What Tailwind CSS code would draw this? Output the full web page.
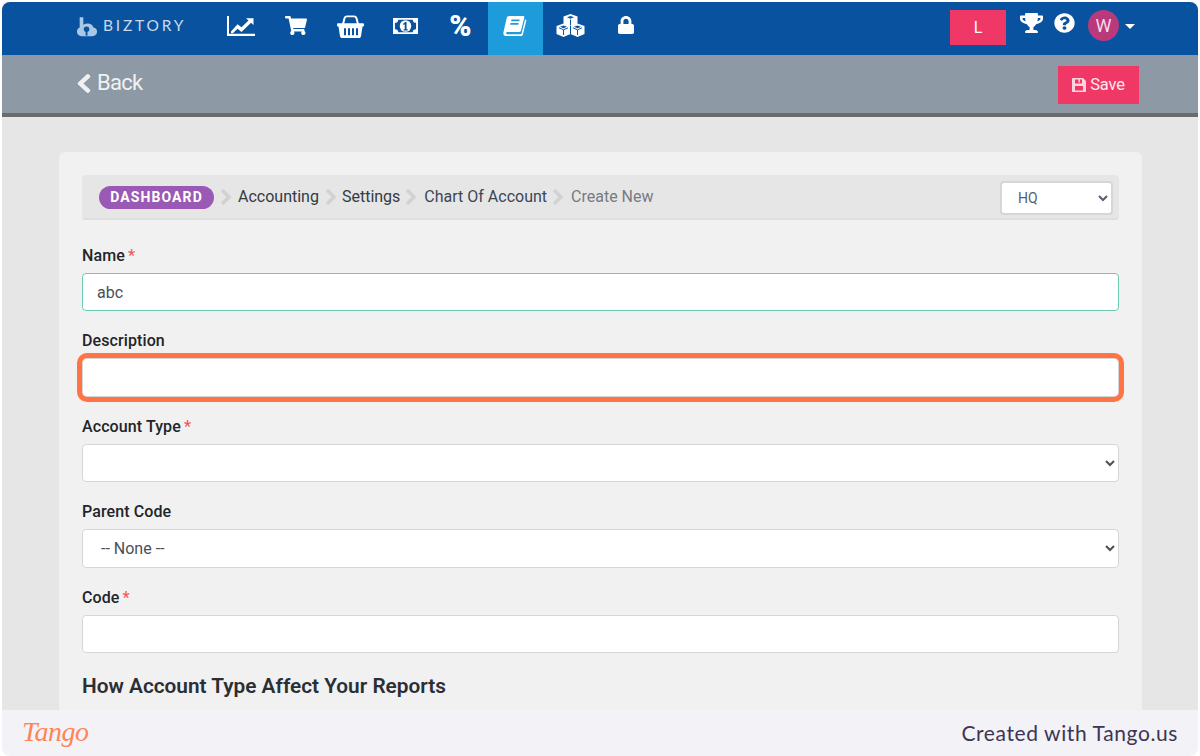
<!DOCTYPE html>
<html lang="en">
<head>
    <meta charset="UTF-8">
    <title>Biztory - Chart Of Account</title>
    <script src="https://cdn.jsdelivr.net/npm/@tailwindcss/browser@4"></script>
</head>
<body class="h-screen overflow-hidden bg-white px-[2px] pt-[2px] flex flex-col font-['Roboto',sans-serif]">
    <div class="flex-1 min-h-0 overflow-hidden rounded-t-[8px] bg-[#e6e6e6]">
        <!-- Top nav -->
        <nav class="h-[53px] bg-[#09529f] flex items-start text-white">
            <div class="w-[211px] pl-[74px] pt-[13px] flex items-center gap-[5px] h-[35px]">
                <svg class="w-[22px] h-[21px] shrink-0" viewBox="0 0 24 22"><path fill="#a9c8e6" d="M4 1h4v8c4-2.500 10-1.500 11 3 3 .5 4 2.500 4 4.500 0 3-2 5-5 5H6c-3 0-5-2-5-5 0-2.500 1.500-4 3-4.500z"/><circle cx="11.500" cy="14" r="3" fill="#09529f"/><rect x="10.500" y="15" width="2" height="6" fill="#09529f"/></svg>
                <span class="text-[15.500px] tracking-[2.800px] text-[#c9d9ea] font-['Lato',sans-serif]">BIZTORY</span>
            </div>
            <a class="w-[55px] h-[53px] flex items-center justify-center pb-[6px]">
                <svg class="w-[28px] h-[20px]" viewBox="0 0 28 22" preserveAspectRatio="none" fill="white"><path d="M0 0h2v19.500h26V22H0z"/><path d="M4 17l6.500-8 4 3.500L21.500 5l-2.500-2.500h7.500V10l-2.500-2.500-9.500 10-4-3.500-4.500 5H4z"/></svg>
            </a>
            <a class="w-[55px] h-[53px] flex items-center justify-center pb-[6px]">
                <svg class="w-[22px] h-[19px]" viewBox="0 0 576 512" preserveAspectRatio="none" fill="white"><path d="M528.12 301.319l47.273-208C578.806 78.301 567.391 64 551.99 64H159.208l-9.166-44.810C147.758 8.021 137.93 0 126.529 0H24C10.745 0 0 10.745 0 24v16c0 13.255 10.745 24 24 24h69.883l70.248 343.435C147.325 417.100 136 435.222 136 456c0 30.928 25.072 56 56 56s56-25.072 56-56c0-15.674-6.447-29.835-16.824-40h209.647C430.447 426.165 424 440.326 424 456c0 30.928 25.072 56 56 56s56-25.072 56-56c0-22.172-12.888-41.332-31.579-50.405l5.517-24.276c3.413-15.018-8.002-29.319-23.403-29.319H218.117l-6.545-32h293.145c11.206 0 20.920-7.754 23.403-18.681z"/></svg>
            </a>
            <a class="w-[55px] h-[53px] flex items-center justify-center pb-[5px] pr-[1px]">
                <svg class="w-[27px] h-[23px]" viewBox="0 0 27 25" preserveAspectRatio="none"><path fill="none" stroke="white" stroke-width="2" d="M6 10l1.500-6.500C8 2 9 1.500 10 1.500h7c1 0 2 .5 2.500 2L21 10"/><path fill="white" fill-rule="evenodd" d="M1 9h25c.6 0 1 .4 1 1v1.500c0 .6-.4 1-1 1h-.5L24 23c-.2 1.200-1 2-2.200 2H5.200C4 25 3.200 24.200 3 23L1.500 12.500H1c-.6 0-1-.4-1-1V10c0-.6.4-1 1-1zM7 14.500v7.500h2v-7.500zM11 14.500v7.500h2v-7.500zM15 14.500v7.500h2v-7.500zM19 14.500v7.500h2v-7.500z"/></svg>
            </a>
            <a class="w-[55px] h-[53px] flex items-center justify-center pb-[6px]">
                <svg class="w-[25px] h-[18px]" viewBox="0 0 26 20" preserveAspectRatio="none"><path fill="white" fill-rule="evenodd" d="M0 1h26v18H0zM2 6.500v7c2.200 0 3.500 1.300 3.500 3.500h15c0-2.200 1.300-3.500 3.500-3.500v-7c-2.200 0-3.500-1.300-3.500-3.500h-15C5.500 5.200 4.200 6.500 2 6.500z"/><ellipse cx="13" cy="10" rx="6" ry="6.500" fill="white"/><path fill="#09529f" d="M12.700 5.500h1.400v8h1.200V15h-4.300v-1.500h1.200V8l-1.100.8-.8-1.100z"/></svg>
            </a>
            <a class="w-[55px] h-[53px] flex items-center justify-center pb-[5px] text-[30px] font-black leading-none">%</a>
            <a class="w-[55px] h-[53px] flex items-center justify-center pb-[6px] bg-[#1e9bdb]">
                <svg class="w-[25px] h-[20px]" viewBox="0 0 25 20"><path fill="white" fill-rule="evenodd" d="M6 0H20c1 0 1.500.7 1.300 1.600l-3.200 13c-.2.9-.9 1.400-1.800 1.400H4.400c-1.500 0-1.600 2.200 0 2.200h12.800c.8 0 1.300-.3 1.500-1L22 3.500l.2 0c.8 0 1.200.6 1 1.400l-3.200 13.300c-.2 1-.9 1.800-2 1.800H3c-2 0-3-1.500-2.600-3.500L3.700 2C4 .7 4.800 0 6 0zM8.500 3.500l-.4 1.700h8.200l.4-1.700zM7.500 7l-.4 1.700h8.200l.4-1.700z"/></svg>
            </a>
            <a class="w-[55px] h-[53px] flex items-center justify-center pb-[6px]">
                <svg class="w-[29px] h-[23px]" viewBox="0 0 29 23">
                    <g fill="white"><path d="M14.500 0l7 2.600v7.200l-7 2.900-7-2.900V2.600z"/><path d="M7.500 9.500l7 2.600v8L7.500 23 .5 20.100v-8z"/><path d="M21.500 9.500l7 2.600v8L21.500 23l-7-2.900v-8z"/></g>
                    <g fill="#09529f"><path d="M14.500 2l3.500 1.300-3.500 1.400-3.500-1.400z"/><path d="M7.500 11.500l3.500 1.300-3.500 1.400L4 12.800z"/><path d="M21.500 11.500l3.500 1.300-3.500 1.400-3.500-1.400z"/></g>
                    <path fill="none" stroke="#09529f" stroke-width="1" d="M14.500 5.500v6M3 13.800l4.500 2 4.500-2M7.500 16v5M17 13.800l4.500 2 4.500-2M21.500 16v5M14.500 12v8"/>
                </svg>
            </a>
            <a class="w-[55px] h-[53px] flex items-center justify-center pb-[7px]">
                <svg class="w-[16px] h-[18px]" viewBox="0 0 448 512" preserveAspectRatio="none" fill="white"><path d="M400 224h-24v-72C376 68.200 307.800 0 224 0S72 68.200 72 152v72H48c-26.500 0-48 21.500-48 48v192c0 26.500 21.500 48 48 48h352c26.500 0 48-21.500 48-48V272c0-26.500-21.500-48-48-48zm-104 0H152v-72c0-39.700 32.300-72 72-72s72 32.300 72 72v72z"/></svg>
            </a>
            <div class="ml-auto mr-[63px] flex items-start">
                <button class="mt-[8px] w-[56px] h-[35px] bg-[#ef3866] text-[16px] text-white">L</button>
                <svg class="ml-[14px] mt-[11px] w-[23px] h-[20px]" viewBox="0 0 576 512" preserveAspectRatio="none" fill="white"><path d="M552 64H448V24c0-13.300-10.700-24-24-24H152c-13.300 0-24 10.700-24 24v40H24C10.700 64 0 74.700 0 88v56c0 35.700 22.500 72.400 61.900 100.700 31.500 22.700 69.800 37.100 110 41.700C203.300 338.500 240 360 240 360v72h-48c-35.300 0-64 20.700-64 56v12c0 6.600 5.400 12 12 12h296c6.600 0 12-5.400 12-12v-12c0-35.300-28.700-56-64-56h-48v-72s36.700-21.500 68.100-73.600c40.300-4.600 78.600-19 110-41.700 39.300-28.300 61.900-65 61.900-100.700V88c0-13.300-10.700-24-24-24zM99.300 192.800C74.900 175.200 64 155.600 64 144v-16h64.200c1 32.600 5.800 61.200 12.800 86.200-15.100-5.200-29.200-12.400-41.700-21.400zM512 144c0 16.100-17.700 36.100-35.300 48.800-12.500 9-26.700 16.200-41.800 21.400 7-25 11.800-53.600 12.800-86.200H512v16z"/></svg>
                <svg class="ml-[11px] mt-[11px] w-[21px] h-[20px]" viewBox="0 0 512 512" preserveAspectRatio="none" fill="white"><path d="M504 256c0 136.997-111.043 248-248 248S8 392.997 8 256C8 119.083 119.043 8 256 8s248 111.083 248 248zM262.655 90c-54.497 0-89.255 22.957-116.549 63.758-3.536 5.286-2.353 12.415 2.715 16.258l34.699 26.310c5.205 3.947 12.621 3.008 16.665-2.122 17.864-22.658 30.113-35.797 57.303-35.797 20.429 0 45.698 13.148 45.698 32.958 0 14.976-12.363 22.667-32.534 33.976C247.128 238.528 216 254.941 216 296v4c0 6.627 5.373 12 12 12h56c6.627 0 12-5.373 12-12v-1.333c0-28.462 83.186-29.647 83.186-106.667 0-58.002-60.165-102-116.531-102zM256 338c-25.365 0-46 20.635-46 46 0 25.364 20.635 46 46 46s46-20.636 46-46c0-25.365-20.635-46-46-46z"/></svg>
                <div class="ml-[13px] mt-[8px] w-[31px] h-[31px] rounded-full bg-[#b93a7c] flex items-center justify-center text-[18px] text-[#f7dbe9]">W</div>
                <span class="ml-[6px] mt-[22px] w-0 h-0 border-x-[5px] border-x-transparent border-t-[5px] border-t-white"></span>
            </div>
        </nav>

        <!-- Action bar -->
        <div class="h-[62px] bg-[#8d99a5] border-b-[4px] border-b-[#6b6b6b] flex items-start justify-between pl-[75px] pr-[59px]">
            <a class="mt-[11px] flex items-center gap-[6px] text-[22px] tracking-[-0.700px] leading-[34px] text-[#f0f1f2]">
                <svg class="w-[14px] h-[21px]" viewBox="0 0 320 512" preserveAspectRatio="none" fill="currentColor" stroke="currentColor" stroke-width="24"><path d="M34.520 239.030L228.870 44.690c9.370-9.370 24.570-9.370 33.940 0l22.670 22.670c9.360 9.360 9.370 24.520.04 33.900L131.490 256l154.020 154.750c9.340 9.380 9.320 24.540-.04 33.900l-22.670 22.670c-9.370 9.370-24.570 9.370-33.940 0L34.520 272.970c-9.370-9.370-9.370-24.570 0-33.940z"/></svg>
                Back
            </a>
            <button class="mt-[11px] w-[81px] h-[38px] bg-[#ef3866] flex items-center justify-center gap-[4px] text-[16.500px] tracking-[-0.200px] text-[#fde8ee]">
                <svg class="w-[14px] h-[14px]" viewBox="0 0 14 14"><path fill="#fbd6e0" fill-rule="evenodd" d="M1 0h10l3 3v10c0 .6-.4 1-1 1H1c-.6 0-1-.4-1-1V1c0-.6.4-1 1-1zM3 1.500V5.500h7V1.500H8v3H6.500v-3zM3 8v4.500h8V8z"/></svg>
                Save
            </button>
        </div>

        <!-- Form card -->
        <div class="mt-[35px] ml-[57px] mr-[56px] bg-[#f1f1f1] rounded-[6px] px-[23px] pt-[23px] pb-[40px]">
            <!-- Breadcrumb -->
            <div class="h-[45px] mb-[23px] bg-[#e6e6e6] border-b-[2px] border-b-[#dedede] rounded-[4px] flex items-start pl-[17px] pr-[6px] text-[16px]">
                <span class="mt-[11px] w-[115px] h-[23px] rounded-full bg-[#9b59b6] text-white text-[14px] font-bold tracking-[1.100px] flex items-center justify-center">DASHBOARD</span>
                <div class="mt-[10px] flex items-center h-[24px]">
                    <svg class="w-[24px] h-[16px]" viewBox="0 0 24 16"><path fill="none" stroke="#d2d2d2" stroke-width="3.500" d="M8 1l7 7-7 7"/></svg>
                    <span class="text-[#333a42]">Accounting</span>
                    <svg class="w-[23px] h-[16px]" viewBox="0 0 23 16"><path fill="none" stroke="#d2d2d2" stroke-width="3.500" d="M8 1l7 7-7 7"/></svg>
                    <span class="text-[#333a42]">Settings</span>
                    <svg class="w-[24px] h-[16px]" viewBox="0 0 24 16"><path fill="none" stroke="#d2d2d2" stroke-width="3.500" d="M7 1l7 7-7 7"/></svg>
                    <span class="text-[#3b4654]">Chart Of Account</span>
                    <svg class="w-[24px] h-[16px]" viewBox="0 0 24 16"><path fill="none" stroke="#d2d2d2" stroke-width="3.500" d="M7 1l7 7-7 7"/></svg>
                    <span class="text-[#777b80]">Create New</span>
                </div>
                <select class="ml-auto mt-[6px] w-[113px] h-[34px] bg-white border-2 border-[#d6d6d6] rounded-[4px] pl-[12px] text-[14px] text-[#55606e]">
                    <option>HQ</option>
                </select>
            </div>

            <!-- Fields -->
            <label class="block h-[24px] mb-[6px] text-[16px] leading-[26px] tracking-[0.100px] font-medium text-[#212529]">Name <span class="text-[#f05a5a] -ml-[1px]">*</span></label>
            <input type="text" value="abc" class="block w-full h-[38.400px] mb-[17px] bg-white border border-[#6fcbb3] rounded-[4px] px-[14px] text-[16px] text-[#495057]">

            <label class="block h-[24px] mb-[6px] text-[16px] leading-[26px] tracking-[0.100px] font-medium text-[#212529]">Description</label>
            <div class="relative h-[38.400px] mb-[17px]">
                <input type="text" class="block w-full h-full bg-white border border-[#d6d6d6] rounded-[4px] px-[14px] text-[16px]">
                <div class="absolute -inset-x-[5px] -top-[5px] -bottom-[5px] border-[5.500px] border-[#ff7442] rounded-[10px]"></div>
            </div>

            <label class="block h-[24px] mb-[6px] text-[16px] leading-[26px] tracking-[0.100px] font-medium text-[#212529]">Account Type <span class="text-[#f05a5a] -ml-[1px]">*</span></label>
            <select class="block w-full h-[38.400px] mb-[17px] bg-white border border-[#d6d6d6] rounded-[4px] px-[14px] text-[16px] text-[#495057]">
                <option></option>
            </select>

            <label class="block h-[24px] mb-[6px] text-[16px] leading-[26px] tracking-[0.100px] font-medium text-[#212529]">Parent Code</label>
            <select class="block w-full h-[38.400px] mb-[17px] bg-white border border-[#d6d6d6] rounded-[4px] px-[14px] text-[16px] text-[#495057]">
                <option>-- None --</option>
            </select>

            <label class="block h-[24px] mb-[6px] text-[16px] leading-[25px] tracking-[0.100px] font-medium text-[#212529]">Code <span class="text-[#f05a5a] -ml-[1px]">*</span></label>
            <input type="text" class="block w-full h-[38.400px] mb-[17px] bg-white border border-[#d6d6d6] rounded-[4px] px-[14px] text-[16px]">

            <h2 class="mt-[19px] text-[20.800px] leading-[28px] font-semibold text-[#2b2f33]">How Account Type Affect Your Reports</h2>
        </div>
    </div>

    <!-- Tango footer -->
    <footer class="h-[46px] shrink-0 bg-[#f3f2f7] rounded-b-[8px] flex items-center justify-between pl-[20px] pr-[20px]">
        <span class="font-['Liberation_Serif',serif] italic text-[28px] leading-none tracking-[-0.500px] text-[#ff8558] -mt-[2px]">Tango</span>
        <span class="font-['Lato',sans-serif] text-[21px] tracking-[0.600px] text-[#3d3553]">Created with Tango.us</span>
    </footer>
</body>
</html>
